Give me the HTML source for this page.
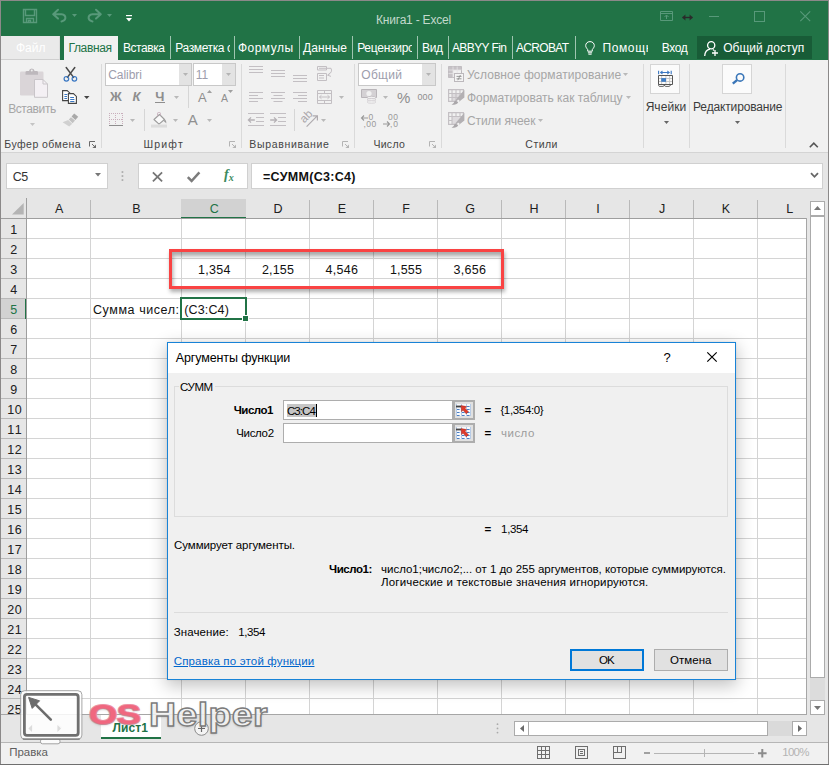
<!DOCTYPE html>
<html lang="ru">
<head>
<meta charset="utf-8">
<title>Книга1 - Excel</title>
<style>
*{box-sizing:border-box;margin:0;padding:0}
html,body{width:829px;height:765px;overflow:hidden;background:#fff}
body{font-family:"Liberation Sans",sans-serif;font-size:12px;color:#262626;position:relative}
.abs{position:absolute}
svg{overflow:visible}
#win{position:absolute;left:0;top:0;width:829px;height:765px;background:#8b8989;overflow:hidden}
.tt{position:absolute;white-space:nowrap}
</style>
</head>
<body>
<div id="win">
<div class="abs" style="left:1px;top:1px;width:827px;height:59px;background:#217346;"></div>
<svg class="abs" style="left:23px;top:9px;" width="14" height="14" viewBox="0 0 14 14"><path d="M0.5 0.5H13.5V13.5H0.5Z M2.5 0.5V6.5H11.5V0.5 M3.5 13.5V9.5H10.5V13.5 M5.5 13.5V11.5H7.5V13.5" fill="none" stroke="#58997a" stroke-width="1.4"/></svg>
<svg class="abs" style="left:52px;top:9px;" width="15" height="13" viewBox="0 0 15 13"><path d="M6 0.8L1.2 5.2L6 9.6M1.5 5.2H9.5Q13.6 5.6 13.4 9.2Q13 12 9.5 12.4" fill="none" stroke="#58997a" stroke-width="2" stroke-linecap="round" stroke-linejoin="round"/></svg>
<svg class="abs" style="left:72px;top:13.7px;" width="5" height="3" viewBox="0 0 5 3"><path d="M0 0H5L2.5 3Z" fill="#58997a"/></svg>
<svg class="abs" style="left:87px;top:9px;" width="15" height="13" viewBox="0 0 15 13"><path d="M9 0.8L13.8 5.2L9 9.6M13.5 5.2H5.5Q1.4 5.6 1.6 9.2Q2 12 5.5 12.4" fill="none" stroke="#58997a" stroke-width="2" stroke-linecap="round" stroke-linejoin="round"/></svg>
<svg class="abs" style="left:107.2px;top:13.7px;" width="5" height="3" viewBox="0 0 5 3"><path d="M0 0H5L2.5 3Z" fill="#58997a"/></svg>
<svg class="abs" style="left:125.5px;top:14.5px;" width="6" height="7" viewBox="0 0 6 7"><path d="M0 0.6H6" stroke="#fff" stroke-width="1.2"/><path d="M0 3H6L3 6.5Z" fill="#fff"/></svg>
<span id="t1" class="tt " style="left:376.06px;top:14.00px;font-size:12px;line-height:12px;color:#c3d9cc;letter-spacing:-0.209px;">Книга1 - Excel</span>
<svg class="abs" style="left:660px;top:11px;" width="13" height="10" viewBox="0 0 13 10"><path d="M0.5 0.5H12.5V9.5H0.5Z M0.5 2.5H12.5 M6.5 8V4.2 M4.5 6L6.5 4L8.5 6" fill="none" stroke="#58997a" stroke-width="1"/></svg>
<svg class="abs" style="left:682px;top:13.5px;" width="11" height="7" viewBox="0 0 11 7"><path d="M0.5 3.5H10.5" stroke="#2a2a2a" stroke-width="1.4"/><path d="M3.4 0.4L0.2 3.5L3.4 6.6Z M7.6 0.4L10.8 3.5L7.6 6.6Z" fill="#2a2a2a"/></svg>
<div class="abs" style="left:708.5px;top:16px;width:10px;height:1px;background:#58997a;"></div>
<div class="abs" style="left:754px;top:11px;width:10.5px;height:10.5px;border:1px solid #58997a;"></div>
<svg class="abs" style="left:800px;top:11px;" width="10.5" height="10.5" viewBox="0 0 10.5 10.5"><path d="M0.3 0.3L10.2 10.2M10.2 0.3L0.3 10.2" stroke="#58997a" stroke-width="1.1"/></svg>
<div class="abs" style="left:1px;top:36px;width:59.4px;height:24px;background:#eaeaea;border-right:1px solid #dcdcdc;border-bottom:1px solid #cfcfcf;"></div>
<span id="t2" class="tt " style="left:15.96px;top:42.00px;font-size:12px;line-height:12px;color:#ffffff;letter-spacing:0.021px;">Файл</span>
<div class="abs" style="left:64px;top:36px;width:54px;height:24px;background:#f1f1f1;"></div>
<span id="t3" class="tt " style="left:68.46px;top:42.00px;font-size:12px;line-height:12px;color:#217346;letter-spacing:-0.351px;">Главная</span>
<span id="t4" class="tt " style="left:122.96px;top:42.00px;font-size:12px;line-height:12px;color:#ffffff;letter-spacing:-0.422px;">Вставка</span>
<div class="abs" style="left:175.36px;top:42.00px;width:54.94px;height:15px;overflow:hidden"><span id="t5" class="tt " style="left:0px;top:0px;font-size:12px;line-height:12px;color:#ffffff;letter-spacing:-0.397px;">Разметка страницы</span></div>
<span id="t6" class="tt " style="left:237.96px;top:42.00px;font-size:12px;line-height:12px;color:#ffffff;letter-spacing:0.477px;">Формулы</span>
<span id="t7" class="tt " style="left:302.96px;top:42.00px;font-size:12px;line-height:12px;color:#ffffff;letter-spacing:0.144px;">Данные</span>
<div class="abs" style="left:357.16px;top:42.00px;width:54.64px;height:15px;overflow:hidden"><span id="t8" class="tt " style="left:0px;top:0px;font-size:12px;line-height:12px;color:#ffffff;letter-spacing:-0.271px;">Рецензирование</span></div>
<span id="t9" class="tt " style="left:421.96px;top:42.00px;font-size:12px;line-height:12px;color:#ffffff;letter-spacing:-0.319px;">Вид</span>
<span id="t10" class="tt " style="left:451.96px;top:42.00px;font-size:12px;line-height:12px;color:#ffffff;letter-spacing:-0.592px;">ABBYY Fin</span>
<span id="t11" class="tt " style="left:515.96px;top:42.00px;font-size:12px;line-height:12px;color:#ffffff;letter-spacing:-0.674px;">ACROBAT</span>
<div class="abs" style="left:602.46px;top:42.00px;width:45.84px;height:15px;overflow:hidden"><span id="t12" class="tt " style="left:0px;top:0px;font-size:12px;line-height:12px;color:#ffffff;letter-spacing:0.618px;">Помощник</span></div>
<span id="t13" class="tt " style="left:661.76px;top:42.00px;font-size:12px;line-height:12px;color:#ffffff;letter-spacing:-0.392px;">Вход</span>
<div class="abs" style="left:170px;top:36px;width:1px;height:23px;background:#9fc5b0;"></div>
<div class="abs" style="left:234px;top:36px;width:1px;height:23px;background:#9fc5b0;"></div>
<div class="abs" style="left:298.5px;top:36px;width:1px;height:23px;background:#9fc5b0;"></div>
<div class="abs" style="left:352px;top:36px;width:1px;height:23px;background:#9fc5b0;"></div>
<div class="abs" style="left:416.5px;top:36px;width:1px;height:23px;background:#9fc5b0;"></div>
<div class="abs" style="left:447.5px;top:36px;width:1px;height:23px;background:#9fc5b0;"></div>
<div class="abs" style="left:511.5px;top:36px;width:1px;height:23px;background:#9fc5b0;"></div>
<div class="abs" style="left:575px;top:36px;width:1px;height:23px;background:#9fc5b0;"></div>
<svg class="abs" style="left:585.4px;top:40.6px;" width="10" height="14" viewBox="0 0 10 14"><path d="M5 0.6C2.2 0.6 0.7 2.6 0.7 4.6C0.7 6.4 1.9 7.4 2.7 8.6V10.2H7.3V8.6C8.1 7.4 9.3 6.4 9.3 4.6C9.3 2.6 7.8 0.6 5 0.6Z M2.9 11.8H7.1 M3.4 13.2H6.6" fill="none" stroke="#fff" stroke-width="1"/></svg>
<div class="abs" style="left:697px;top:36px;width:114.5px;height:23px;background:#185c37;"></div>
<svg class="abs" style="left:704px;top:40.5px;" width="15" height="15.5" viewBox="0 0 15 15.5"><circle cx="7.2" cy="4.2" r="3.6" fill="none" stroke="#fff" stroke-width="1.3"/><path d="M0.7 15C0.9 11 3.4 8.6 6 8.2M9 8.6L10 9.4" fill="none" stroke="#fff" stroke-width="1.3"/><path d="M11 9V15M8 12H14" stroke="#fff" stroke-width="1.3"/></svg>
<span id="t14" class="tt " style="left:723.16px;top:42.00px;font-size:12px;line-height:12px;color:#ffffff;letter-spacing:0.041px;">Общий доступ</span>
<div class="abs" style="left:1px;top:60px;width:827px;height:92px;background:#f1f1f1;"></div>
<div class="abs" style="left:1px;top:152px;width:827px;height:1px;background:#d4d4d4;"></div>
<svg class="abs" style="left:19px;top:68px;" width="30" height="30" viewBox="0 0 30 30"><rect x="1" y="3.5" width="23.5" height="24" rx="1.2" fill="#dad5d8"/><path d="M6.5 6.8V4.2Q6.5 3 8 3H10Q10.3 0.4 12.8 0.4Q15.3 0.4 15.6 3H17.6Q19 3 19 4.2V6.8Z" fill="#bdb8bc"/><circle cx="12.8" cy="2.6" r="1" fill="#eee"/><path d="M15.5 11.5H24L28.5 16V29.3H15.5Z" fill="#f4f0f4" stroke="#c9c5c9" stroke-width="1"/><path d="M24 11.5V16H28.5" fill="none" stroke="#c9c5c9" stroke-width="1"/></svg>
<span id="t15" class="tt " style="left:8.16px;top:103.00px;font-size:12px;line-height:12px;color:#a6a6a6;letter-spacing:-0.399px;">Вставить</span>
<svg class="abs" style="left:30.1px;top:122.9px;" width="5" height="3" viewBox="0 0 5 3"><path d="M0 0H5L2.5 3Z" fill="#c4c4c4"/></svg>
<svg class="abs" style="left:62.5px;top:66.5px;" width="15" height="15" viewBox="0 0 15 15"><path d="M3.2 0.5L10.6 10.4M11.8 0.5L4.4 10.4" stroke="#4a4a4a" stroke-width="1.5" stroke-linecap="round"/><circle cx="3.4" cy="11.8" r="2.3" fill="none" stroke="#3b78c3" stroke-width="1.2"/><circle cx="11.4" cy="11.8" r="2.3" fill="none" stroke="#3b78c3" stroke-width="1.2"/></svg>
<svg class="abs" style="left:62px;top:90px;" width="15" height="14" viewBox="0 0 15 14"><path d="M0.6 0.6H5.2L8 3.2V10.6H0.6Z" fill="#fff" stroke="#444" stroke-width="1.1"/><path d="M2.4 4.5H5.4M2.4 6.5H5M2.4 8.5H5" stroke="#3b78c3" stroke-width="1"/><path d="M6.4 3.6H11.4L14.4 6.4V13.4H6.4Z" fill="#fff" stroke="#444" stroke-width="1.1"/><path d="M8.2 7.5H12M8.2 9.5H12.4M8.2 11.5H12.4" stroke="#3b78c3" stroke-width="1"/></svg>
<svg class="abs" style="left:83.85px;top:96px;" width="5.5" height="3" viewBox="0 0 5.5 3"><path d="M0 0H5.5L2.75 3Z" fill="#444"/></svg>
<svg class="abs" style="left:62px;top:113px;" width="17" height="14" viewBox="0 0 17 14"><path d="M12.2 0.6L16.2 3.8L13.4 7L9.6 3.6Z" fill="#a9a9a9"/><path d="M9 4.2L13 7.6L10.6 10.2L6.8 6.6Z" fill="#c2c2c2"/><path d="M6.2 7L10.2 10.8L7.2 13.6L0.6 9.2Z" fill="#d0d0d0"/></svg>
<span id="t16" class="tt " style="left:4.33px;top:139.00px;font-size:10.5px;line-height:10.5px;color:#444444;letter-spacing:0.453px;">Буфер обмена</span>
<svg class="abs" style="left:89px;top:141px;" width="7" height="7" viewBox="0 0 7 7"><path d="M0.5 5.5V0.5H6" fill="none" stroke="#6a6a6a" stroke-width="1"/><path d="M3 3L5.6 5.6" stroke="#6a6a6a" stroke-width="1"/><path d="M7 3.4V7H3.4Z" fill="#6a6a6a"/></svg>
<div class="abs" style="left:100.5px;top:64px;width:1px;height:84px;background:#dadada;"></div>
<div class="abs" style="left:105px;top:63px;width:87px;height:23px;background:#ffffff;border:1px solid #c8c8c8;"></div>
<div class="abs" style="left:179.4px;top:64px;width:11.6px;height:21px;background:#e3e3e3;"></div>
<svg class="abs" style="left:182.7px;top:73.2px;" width="5" height="3" viewBox="0 0 5 3"><path d="M0 0H5L2.5 3Z" fill="#b4b4b4"/></svg>
<span id="t17" class="tt " style="left:108.26px;top:69.00px;font-size:12px;line-height:12px;color:#9d9dac;letter-spacing:-0.056px;">Calibri</span>
<div class="abs" style="left:193.4px;top:63px;width:42.4px;height:23px;background:#ffffff;border:1px solid #c8c8c8;"></div>
<div class="abs" style="left:222px;top:64px;width:12.8px;height:21px;background:#e3e3e3;"></div>
<svg class="abs" style="left:225.9px;top:73.2px;" width="5" height="3" viewBox="0 0 5 3"><path d="M0 0H5L2.5 3Z" fill="#b4b4b4"/></svg>
<span id="t18" class="tt " style="left:195.66px;top:69.00px;font-size:12px;line-height:12px;color:#9d9dac;">11</span>
<span id="t19" class="tt " style="left:110.02px;top:90.00px;font-size:13px;line-height:13px;color:#8e8e8e;font-weight:700;">Ж</span>
<span id="t20" class="tt " style="left:132.41px;top:90.00px;font-size:13px;line-height:13px;color:#8e8e8e;font-weight:700;font-style:italic;">К</span>
<span id="t21" class="tt " style="left:155.31px;top:90.00px;font-size:13px;line-height:13px;color:#8e8e8e;font-weight:700;">Ч</span>
<div class="abs" style="left:155px;top:102px;width:10px;height:1px;background:#8e8e8e;"></div>
<svg class="abs" style="left:173.9px;top:95.7px;" width="5" height="3" viewBox="0 0 5 3"><path d="M0 0H5L2.5 3Z" fill="#b9b9b9"/></svg>
<div class="abs" style="left:187.5px;top:86px;width:1px;height:22px;background:#d6d6d6;"></div>
<span id="t22" class="tt " style="left:198.01px;top:91.00px;font-size:13px;line-height:13px;color:#8e8e8e;">A</span>
<svg class="abs" style="left:207px;top:90px;" width="5" height="3" viewBox="0 0 5 3"><path d="M0 3H5L2.5 0Z" fill="#a0a0a0"/></svg>
<span id="t23" class="tt " style="left:220.93px;top:93.00px;font-size:10.5px;line-height:10.5px;color:#8e8e8e;">A</span>
<svg class="abs" style="left:228px;top:90px;" width="5" height="3" viewBox="0 0 5 3"><path d="M0 0H5L2.5 3Z" fill="#a0a0a0"/></svg>
<svg class="abs" style="left:109px;top:113px;" width="14" height="13" viewBox="0 0 14 13"><path d="M0.5 0V12M6.5 0V12M13.5 0V12M0 0.5H14M0 6.5H14" fill="none" stroke="#c9afbc" stroke-width="1" stroke-dasharray="1 1" shape-rendering="crispEdges"/><path d="M0 12.5H14" stroke="#8e8e8e" stroke-width="1" shape-rendering="crispEdges"/></svg>
<svg class="abs" style="left:129.9px;top:118.8px;" width="5" height="3" viewBox="0 0 5 3"><path d="M0 0H5L2.5 3Z" fill="#b9b9b9"/></svg>
<div class="abs" style="left:143.6px;top:109px;width:1px;height:22px;background:#d6d6d6;"></div>
<svg class="abs" style="left:151px;top:112px;" width="17" height="16" viewBox="0 0 17 16"><path d="M3 7.5L8.5 2.5L13.5 7.5L8 12.2Z" fill="#fafafa" stroke="#9c9c9c" stroke-width="1.1" stroke-linejoin="round"/><path d="M6.6 4.2V1.2Q6.6 0.5 7.6 0.5H8.4Q9.4 0.5 9.4 1.2V3.4" fill="none" stroke="#c9b3bf" stroke-width="1"/><path d="M13.2 7Q15.8 8.6 15.2 11.4Q14.2 10 13.2 9.8Z" fill="#9c9c9c"/><rect x="0" y="12.6" width="16" height="3" fill="#dcdcdc"/></svg>
<svg class="abs" style="left:173px;top:118.8px;" width="5" height="3" viewBox="0 0 5 3"><path d="M0 0H5L2.5 3Z" fill="#b9b9b9"/></svg>
<span id="t24" class="tt " style="left:187.82px;top:112.00px;font-size:15px;line-height:15px;color:#909090;">A</span>
<svg class="abs" style="left:207px;top:118.8px;" width="5" height="3" viewBox="0 0 5 3"><path d="M0 0H5L2.5 3Z" fill="#b9b9b9"/></svg>
<span id="t25" class="tt " style="left:143.53px;top:139.00px;font-size:10.5px;line-height:10.5px;color:#444444;letter-spacing:1.175px;">Шрифт</span>
<svg class="abs" style="left:229px;top:141px;" width="7" height="7" viewBox="0 0 7 7"><path d="M0.5 5.5V0.5H6" fill="none" stroke="#b4b4b4" stroke-width="1"/><path d="M3 3L5.6 5.6" stroke="#b4b4b4" stroke-width="1"/><path d="M7 3.4V7H3.4Z" fill="#b4b4b4"/></svg>
<div class="abs" style="left:240.6px;top:64px;width:1px;height:84px;background:#dadada;"></div>
<svg class="abs" style="left:0px;top:0px;" width="1" height="1" viewBox="0 0 1 1"><path d="M249 66.5H263M249 69.5H263M249 72.5H263" stroke="#c3bfc3" stroke-width="1"/></svg>
<svg class="abs" style="left:0px;top:0px;" width="1" height="1" viewBox="0 0 1 1"><path d="M271 70.5H285M271 73.5H285M271 76.5H285" stroke="#c3bfc3" stroke-width="1"/></svg>
<svg class="abs" style="left:0px;top:0px;" width="1" height="1" viewBox="0 0 1 1"><path d="M293 75.5H307M293 78.5H307M293 81.5H307" stroke="#c3bfc3" stroke-width="1"/></svg>
<svg class="abs" style="left:0px;top:0px;" width="1" height="1" viewBox="0 0 1 1"><path d="M249 92.5H263M249 95.5H258M249 98.5H263M249 101.5H258" stroke="#c3bfc3" stroke-width="1"/></svg>
<svg class="abs" style="left:0px;top:0px;" width="1" height="1" viewBox="0 0 1 1"><path d="M271 92.5H285M273.5 95.5H282.5M271 98.5H285M273.5 101.5H282.5" stroke="#c3bfc3" stroke-width="1"/></svg>
<svg class="abs" style="left:0px;top:0px;" width="1" height="1" viewBox="0 0 1 1"><path d="M293 92.5H307M298 95.5H307M293 98.5H307M298 101.5H307" stroke="#c3bfc3" stroke-width="1"/></svg>
<svg class="abs" style="left:317px;top:66px;" width="16" height="15" viewBox="0 0 16 15"><path d="M0.5 0.5H9.5V4H0.5Z M0.5 7.5H9.5V14.5H0.5Z" fill="none" stroke="#c3bfc3" stroke-width="1"/><path d="M2 2.3H14 M2 9.5H7 M2 12H7" stroke="#c3bfc3" stroke-width="1"/><path d="M14 2.3Q16 6 11 9M13.4 6.6L10.6 9.2L14 10.4" fill="none" stroke="#c3bfc3" stroke-width="1"/></svg>
<svg class="abs" style="left:317px;top:89.5px;" width="15" height="14" viewBox="0 0 15 14"><path d="M0.5 0.5H14.5V13.5H0.5Z M0.5 3.5H14.5 M0.5 10.5H14.5 M7.5 0.5V3.5 M7.5 10.5V13.5" fill="none" stroke="#c3bfc3" stroke-width="1"/><path d="M2.5 7H12.5 M4.5 5.2L2.5 7L4.5 8.8 M10.5 5.2L12.5 7L10.5 8.8" fill="none" stroke="#c3bfc3" stroke-width="1"/></svg>
<svg class="abs" style="left:338.9px;top:95.9px;" width="5" height="3" viewBox="0 0 5 3"><path d="M0 0H5L2.5 3Z" fill="#b9b9b9"/></svg>
<svg class="abs" style="left:0px;top:0px;" width="1" height="1" viewBox="0 0 1 1"><path d="M248 113.5H264M256 117.5H264M256 121.5H264M248 125.5H264" stroke="#c3bfc3" stroke-width="1"/></svg>
<svg class="abs" style="left:248px;top:116.5px;" width="7" height="6" viewBox="0 0 7 6"><path d="M0.3 3H6.8M3 0.4L0.4 3L3 5.6" fill="none" stroke="#b5b1b5" stroke-width="1.3"/></svg>
<svg class="abs" style="left:0px;top:0px;" width="1" height="1" viewBox="0 0 1 1"><path d="M270 113.5H286M278 117.5H286M278 121.5H286M270 125.5H286" stroke="#c3bfc3" stroke-width="1"/></svg>
<svg class="abs" style="left:270px;top:116.5px;" width="7" height="6" viewBox="0 0 7 6"><path d="M0.2 3H6.7M4 0.4L6.6 3L4 5.6" fill="none" stroke="#b5b1b5" stroke-width="1.3"/></svg>
<div class="abs" style="left:293.6px;top:109px;width:1px;height:22px;background:#d6d6d6;"></div>
<span id="t26" class="tt " style="left:-0.52px;top:-9.00px;font-size:11.5px;line-height:11.5px;color:#a9a5a9;left:300px;top:110.5px;transform:rotate(-45deg);transform-origin:50% 50%;">ab</span>
<svg class="abs" style="left:304px;top:113px;" width="14" height="14" viewBox="0 0 14 14"><path d="M2.6 13.6L13 3.2M8.6 2.8H13.4V7.6" fill="none" stroke="#aeaaae" stroke-width="1.2"/></svg>
<svg class="abs" style="left:321.1px;top:118.7px;" width="5" height="3" viewBox="0 0 5 3"><path d="M0 0H5L2.5 3Z" fill="#b9b9b9"/></svg>
<span id="t27" class="tt " style="left:249.33px;top:139.00px;font-size:10.5px;line-height:10.5px;color:#444444;letter-spacing:0.660px;">Выравнивание</span>
<svg class="abs" style="left:342px;top:141px;" width="7" height="7" viewBox="0 0 7 7"><path d="M0.5 5.5V0.5H6" fill="none" stroke="#b4b4b4" stroke-width="1"/><path d="M3 3L5.6 5.6" stroke="#b4b4b4" stroke-width="1"/><path d="M7 3.4V7H3.4Z" fill="#b4b4b4"/></svg>
<div class="abs" style="left:353.6px;top:64px;width:1px;height:84px;background:#dadada;"></div>
<div class="abs" style="left:358.3px;top:63px;width:77.4px;height:23px;background:#ffffff;border:1px solid #c8c8c8;"></div>
<div class="abs" style="left:422px;top:64px;width:12.7px;height:21px;background:#e3e3e3;"></div>
<svg class="abs" style="left:425.85px;top:73.2px;" width="5" height="3" viewBox="0 0 5 3"><path d="M0 0H5L2.5 3Z" fill="#b4b4b4"/></svg>
<span id="t28" class="tt " style="left:361.36px;top:69.00px;font-size:12px;line-height:12px;color:#9d9dac;letter-spacing:0.270px;">Общий</span>
<svg class="abs" style="left:361px;top:89px;" width="16" height="15" viewBox="0 0 16 15"><path d="M0.5 0.5H15.5V8.5H0.5Z" fill="#d4d1d4" stroke="#b9b5b9" stroke-width="1"/><circle cx="8" cy="4.5" r="2.6" fill="#f1f1f1"/><ellipse cx="10.5" cy="8.6" rx="4.4" ry="1.3" fill="#f1f1f1" stroke="#c4c0c4" stroke-width="0.9"/><ellipse cx="10.5" cy="10.8" rx="4.4" ry="1.3" fill="#f1f1f1" stroke="#cfcbcf" stroke-width="0.9"/><ellipse cx="10.5" cy="13" rx="4.4" ry="1.3" fill="#f1f1f1" stroke="#d6d3d6" stroke-width="0.9"/></svg>
<svg class="abs" style="left:383px;top:95.9px;" width="5" height="3" viewBox="0 0 5 3"><path d="M0 0H5L2.5 3Z" fill="#b9b9b9"/></svg>
<span id="t29" class="tt " style="left:396.93px;top:90.00px;font-size:15px;line-height:15px;color:#8e8e8e;">%</span>
<span id="t30" class="tt " style="left:417.40px;top:93.00px;font-size:9px;line-height:9px;color:#8e8e8e;letter-spacing:0.139px;">000</span>
<span id="t31" class="tt " style="left:368.62px;top:113.00px;font-size:8.5px;line-height:8.5px;color:#999;">0</span>
<span id="t32" class="tt " style="left:363.62px;top:120.00px;font-size:8.5px;line-height:8.5px;color:#999;letter-spacing:0.368px;">,00</span>
<svg class="abs" style="left:361.3px;top:114.5px;" width="8" height="6" viewBox="0 0 8 6"><path d="M0.4 3H7M3 0.5L0.5 3L3 5.5" fill="none" stroke="#999" stroke-width="1.1"/></svg>
<span id="t33" class="tt " style="left:388.12px;top:113.00px;font-size:8.5px;line-height:8.5px;color:#999;letter-spacing:0.296px;">00</span>
<span id="t34" class="tt " style="left:390.12px;top:120.00px;font-size:8.5px;line-height:8.5px;color:#999;letter-spacing:0.671px;">,0</span>
<svg class="abs" style="left:383px;top:121px;" width="8" height="6" viewBox="0 0 8 6"><path d="M0 3H6.6M4 0.5L6.5 3L4 5.5" fill="none" stroke="#999" stroke-width="1.1"/></svg>
<span id="t35" class="tt " style="left:373.43px;top:139.00px;font-size:10.5px;line-height:10.5px;color:#444444;letter-spacing:0.285px;">Число</span>
<svg class="abs" style="left:429px;top:141px;" width="7" height="7" viewBox="0 0 7 7"><path d="M0.5 5.5V0.5H6" fill="none" stroke="#b4b4b4" stroke-width="1"/><path d="M3 3L5.6 5.6" stroke="#b4b4b4" stroke-width="1"/><path d="M7 3.4V7H3.4Z" fill="#b4b4b4"/></svg>
<div class="abs" style="left:440.5px;top:64px;width:1px;height:84px;background:#dadada;"></div>
<svg class="abs" style="left:448px;top:66px;" width="16" height="16" viewBox="0 0 16 16"><path d="M0.5 0.5H13.5V11.5H0.5Z" fill="none" stroke="#bcb8bc" stroke-width="1"/><path d="M0.5 0.5H5V11.5H0.5Z M0.5 0.5H13.5V4H0.5Z" fill="#c6c2c6"/><path d="M5 0.5V11.5M9.2 0.5V11.5M0.5 4H13.5M0.5 7.6H13.5" stroke="#e6e3e6" stroke-width="0.8"/><rect x="6.5" y="7.5" width="9" height="8" fill="#f4f4f4" stroke="#bcb8bc" stroke-width="1"/><path d="M8.5 10.4H13.5M8.5 12.8H13.5M12.4 9L9.8 14.2" stroke="#8e8e8e" stroke-width="0.9"/></svg>
<svg class="abs" style="left:448px;top:89px;" width="16" height="16" viewBox="0 0 16 16"><rect x="4" y="4.5" width="8" height="8" fill="#dedbde"/><path d="M4 0.5V12.5M8 0.5V12.5M12 0.5V12.5M0.5 4.5H15.5M0.5 8.5H15.5" fill="none" stroke="#c4c0c4" stroke-width="1.1"/><path d="M0.6 0.6H15.4V12.4H0.6Z" fill="none" stroke="#c4c0c4" stroke-width="1.2"/><path d="M16.8 7.6V14H9.4Z" fill="#f1f1f1"/><path d="M16.4 0.8V8.4L10.6 13L7.4 11.2Z" fill="#b3b0b3"/><path d="M7 11.4L10.2 13.2Q9 15.8 3.6 15.8Q6.2 14 7 11.4Z" fill="#aaa7aa"/><circle cx="10.3" cy="12" r="1.15" fill="#f1f1f1"/></svg>
<svg class="abs" style="left:448px;top:112px;" width="16" height="16" viewBox="0 0 16 16"><rect x="4" y="4.5" width="11.5" height="8" fill="#dedbde"/><path d="M4 0.5V12.5M8 0.5V4.5M12 0.5V4.5M0.5 4.5H15.5M0.5 8.5H4" fill="none" stroke="#c4c0c4" stroke-width="1.1"/><path d="M0.6 0.6H15.4V12.4H0.6Z" fill="none" stroke="#c4c0c4" stroke-width="1.2"/><path d="M16.8 7.6V14H9.4Z" fill="#f1f1f1"/><path d="M16.4 0.8V8.4L10.6 13L7.4 11.2Z" fill="#b3b0b3"/><path d="M7 11.4L10.2 13.2Q9 15.8 3.6 15.8Q6.2 14 7 11.4Z" fill="#aaa7aa"/><circle cx="10.3" cy="12" r="1.15" fill="#f1f1f1"/></svg>
<span id="t36" class="tt " style="left:466.96px;top:69.00px;font-size:12px;line-height:12px;color:#a6a6a6;letter-spacing:0.073px;">Условное форматирование</span>
<svg class="abs" style="left:622.8px;top:73.1px;" width="5" height="3" viewBox="0 0 5 3"><path d="M0 0H5L2.5 3Z" fill="#b9b9b9"/></svg>
<span id="t37" class="tt " style="left:466.96px;top:92.00px;font-size:12px;line-height:12px;color:#a6a6a6;letter-spacing:-0.023px;">Форматировать как таблицу</span>
<svg class="abs" style="left:625.8px;top:95.9px;" width="5" height="3" viewBox="0 0 5 3"><path d="M0 0H5L2.5 3Z" fill="#b9b9b9"/></svg>
<span id="t38" class="tt " style="left:466.96px;top:115.00px;font-size:12px;line-height:12px;color:#a6a6a6;letter-spacing:-0.079px;">Стили ячеек</span>
<svg class="abs" style="left:537.9px;top:118.7px;" width="5" height="3" viewBox="0 0 5 3"><path d="M0 0H5L2.5 3Z" fill="#b9b9b9"/></svg>
<span id="t39" class="tt " style="left:525.33px;top:139.00px;font-size:10.5px;line-height:10.5px;color:#444444;letter-spacing:0.474px;">Стили</span>
<div class="abs" style="left:642.7px;top:64px;width:1px;height:84px;background:#dadada;"></div>
<div class="abs" style="left:650.3px;top:64px;width:29.7px;height:29.7px;background:#fbfbfb;border:1px solid #d5d5d5;"></div>
<svg class="abs" style="left:658px;top:70px;" width="15" height="17" viewBox="0 0 15 17"><path d="M2.6 2.5H11.2M0.6 0.8V4.2M13.2 0.8V4.2" fill="none" stroke="#3b78c3" stroke-width="1.1"/><path d="M4.2 0.9L2.2 2.5L4.2 4.1ZM9.6 0.9L11.6 2.5L9.6 4.1Z" fill="#3b78c3" stroke="#3b78c3" stroke-width="0.6"/><path d="M3.6 5.5V14.5M7.9 5.5V14.5M11.6 5.5V14.5M0.5 8.5H14.5M0.5 11.5H14.5" fill="none" stroke="#c2c2c2" stroke-width="0.9"/><path d="M0.5 5.5H14.5V14.5H0.5Z" fill="none" stroke="#555" stroke-width="1"/><rect x="3.2" y="8.1" width="4.8" height="3.7" fill="#3f7dc4"/><path d="M0.6 14.6V15.6Q0.8 16.4 1.8 16.4H5Q6 16.4 6.2 15.2M6.4 14.8Q6.6 16.4 7.6 16.4H11Q12 16.4 12.6 14.8" fill="none" stroke="#555" stroke-width="0.9"/></svg>
<span id="t40" class="tt " style="left:645.66px;top:101.00px;font-size:12px;line-height:12px;color:#3c3c3c;letter-spacing:0.046px;">Ячейки</span>
<svg class="abs" style="left:663.9px;top:120.7px;" width="5" height="3" viewBox="0 0 5 3"><path d="M0 0H5L2.5 3Z" fill="#666"/></svg>
<div class="abs" style="left:689px;top:64px;width:1px;height:84px;background:#dadada;"></div>
<div class="abs" style="left:722px;top:64px;width:29.7px;height:29.7px;background:#fbfbfb;border:1px solid #d5d5d5;"></div>
<svg class="abs" style="left:730.5px;top:73px;" width="14" height="12" viewBox="0 0 14 12"><circle cx="9.1" cy="4.4" r="3.7" fill="none" stroke="#3a76b8" stroke-width="1.6"/><path d="M6 7.1L1.8 10.6" stroke="#3a76b8" stroke-width="2.5" stroke-linecap="butt"/></svg>
<span id="t41" class="tt " style="left:693.06px;top:101.00px;font-size:12px;line-height:12px;color:#3c3c3c;letter-spacing:-0.149px;">Редактирование</span>
<svg class="abs" style="left:734.9px;top:120.7px;" width="5" height="3" viewBox="0 0 5 3"><path d="M0 0H5L2.5 3Z" fill="#666"/></svg>
<div class="abs" style="left:785.2px;top:64px;width:1px;height:84px;background:#dadada;"></div>
<svg class="abs" style="left:808.5px;top:141.5px;" width="10" height="6" viewBox="0 0 10 6"><path d="M0.8 5.2L4.8 1.2L8.8 5.2" fill="none" stroke="#555" stroke-width="1.6"/></svg>
<div class="abs" style="left:1px;top:153px;width:827px;height:45px;background:#e6e6e6;"></div>
<div class="abs" style="left:6px;top:163px;width:102px;height:26px;background:#ffffff;border:1px solid #d0d0d0;"></div>
<span id="t42" class="tt " style="left:12.74px;top:171.00px;font-size:12.5px;line-height:12.5px;color:#333;letter-spacing:-0.459px;">C5</span>
<svg class="abs" style="left:94.5px;top:173.3px;" width="6" height="3.4" viewBox="0 0 6 3.4"><path d="M0 0H6L3 3.4Z" fill="#777"/></svg>
<svg class="abs" style="left:121.3px;top:171px;" width="3" height="10" viewBox="0 0 3 10"><rect x="0.6" y="0.2" width="1.7" height="1.7" fill="#a9a9a9"/><rect x="0.6" y="4.2" width="1.7" height="1.7" fill="#a9a9a9"/><rect x="0.6" y="8.2" width="1.7" height="1.7" fill="#a9a9a9"/></svg>
<div class="abs" style="left:138px;top:163px;width:110px;height:26px;background:#ffffff;border:1px solid #d0d0d0;"></div>
<svg class="abs" style="left:151.5px;top:170.5px;" width="11" height="11" viewBox="0 0 11 11"><path d="M0.9 1.4L10.1 10.4M10.1 1.4L0.9 10.4" stroke="#767676" stroke-width="1.8"/></svg>
<svg class="abs" style="left:187px;top:170.5px;" width="13" height="11" viewBox="0 0 13 11"><path d="M0.8 6.2L4.6 10L12.4 1.4" fill="none" stroke="#7c7c7c" stroke-width="2.5"/></svg>
<span id="t43" class="tt " style="left:-0.63px;top:-12.00px;font-size:14px;line-height:14px;color:#3b8a5e;left:224px;top:167.5px;font-family:'Liberation Serif',serif;font-style:italic;font-weight:700;">f</span>
<span id="t44" class="tt " style="left:-0.45px;top:-8.00px;font-size:10px;line-height:10px;color:#3b8a5e;left:228.8px;top:173px;font-family:'Liberation Serif',serif;font-style:italic;font-weight:700;">x</span>
<div class="abs" style="left:251px;top:163px;width:572px;height:26px;background:#ffffff;border:1px solid #d0d0d0;"></div>
<span id="t45" class="tt " style="left:263.04px;top:171.00px;font-size:12.5px;line-height:12.5px;color:#111;font-weight:700;letter-spacing:0.282px;">=СУММ(C3:C4)</span>
<svg class="abs" style="left:809.5px;top:171.5px;" width="9" height="7" viewBox="0 0 9 7"><path d="M1 1.2L4.5 4.8L8 1.2" fill="none" stroke="#666" stroke-width="1.8"/></svg>
<div class="abs" style="left:1px;top:198px;width:827px;height:517px;background:#e6e6e6;"></div>
<div class="abs" style="left:27px;top:219px;width:780px;height:496px;background:#ffffff;"></div>
<svg class="abs" style="left:0px;top:0px;" width="1" height="1" viewBox="0 0 1 1"><path d="M90.5 219V715M181.5 219V715M245.5 219V715M309.5 219V715M373.5 219V715M437.5 219V715M501.5 219V715M565.5 219V715M629.5 219V715M693.5 219V715M757.5 219V715M27 238.5H806M27 258.5H806M27 278.5H806M27 298.5H806M27 318.5H806M27 338.5H806M27 358.5H806M27 378.5H806M27 398.5H806M27 418.5H806M27 438.5H806M27 458.5H806M27 478.5H806M27 498.5H806M27 518.5H806M27 538.5H806M27 558.5H806M27 578.5H806M27 598.5H806M27 618.5H806M27 638.5H806M27 658.5H806M27 678.5H806M27 698.5H806" stroke="#d4d4d4" stroke-width="1" shape-rendering="crispEdges"/></svg>
<svg class="abs" style="left:0px;top:0px;" width="1" height="1" viewBox="0 0 1 1"><path d="M90.5 200V218M181.5 200V218M245.5 200V218M309.5 200V218M373.5 200V218M437.5 200V218M501.5 200V218M565.5 200V218M629.5 200V218M693.5 200V218M757.5 200V218M1 238.5H26M1 258.5H26M1 278.5H26M1 298.5H26M1 318.5H26M1 338.5H26M1 358.5H26M1 378.5H26M1 398.5H26M1 418.5H26M1 438.5H26M1 458.5H26M1 478.5H26M1 498.5H26M1 518.5H26M1 538.5H26M1 558.5H26M1 578.5H26M1 598.5H26M1 618.5H26M1 638.5H26M1 658.5H26M1 678.5H26M1 698.5H26" stroke="#b9b9b9" stroke-width="1" shape-rendering="crispEdges"/></svg>
<div class="abs" style="left:181px;top:199px;width:65px;height:18px;background:#d2d2d2;"></div>
<div class="abs" style="left:181px;top:217px;width:65px;height:2px;background:#217346;"></div>
<div class="abs" style="left:1px;top:299px;width:25px;height:19px;background:#d2d2d2;"></div>
<div class="abs" style="left:25px;top:299px;width:2px;height:20px;background:#217346;"></div>
<div class="abs" style="left:1px;top:218px;width:806px;height:1px;background:#9e9e9e;"></div>
<div class="abs" style="left:26px;top:198px;width:1px;height:517px;background:#9e9e9e;"></div>
<div class="abs" style="left:806px;top:218px;width:1px;height:497px;background:#a6a6a6;"></div>
<div class="abs" style="left:1px;top:714px;width:806px;height:1px;background:#a6a6a6;"></div>
<svg class="abs" style="left:11.5px;top:203.3px;" width="11.7" height="11.5" viewBox="0 0 11.7 11.5"><path d="M11.7 0V11.5H0Z" fill="#b4b4b4"/></svg>
<span id="t46" class="tt " style="left:59.14px;top:203.00px;font-size:12.5px;line-height:12.5px;color:#202020;transform:translateX(-50%);">A</span>
<span id="t47" class="tt " style="left:136.44px;top:203.00px;font-size:12.5px;line-height:12.5px;color:#202020;transform:translateX(-50%);">B</span>
<span id="t48" class="tt " style="left:214.24px;top:203.00px;font-size:12.5px;line-height:12.5px;color:#217346;transform:translateX(-50%);">C</span>
<span id="t49" class="tt " style="left:278.04px;top:203.00px;font-size:12.5px;line-height:12.5px;color:#202020;transform:translateX(-50%);">D</span>
<span id="t50" class="tt " style="left:342.04px;top:203.00px;font-size:12.5px;line-height:12.5px;color:#202020;transform:translateX(-50%);">E</span>
<span id="t51" class="tt " style="left:406.04px;top:203.00px;font-size:12.5px;line-height:12.5px;color:#202020;transform:translateX(-50%);">F</span>
<span id="t52" class="tt " style="left:470.04px;top:203.00px;font-size:12.5px;line-height:12.5px;color:#202020;transform:translateX(-50%);">G</span>
<span id="t53" class="tt " style="left:534.04px;top:203.00px;font-size:12.5px;line-height:12.5px;color:#202020;transform:translateX(-50%);">H</span>
<span id="t54" class="tt " style="left:598.04px;top:203.00px;font-size:12.5px;line-height:12.5px;color:#202020;transform:translateX(-50%);">I</span>
<span id="t55" class="tt " style="left:662.04px;top:203.00px;font-size:12.5px;line-height:12.5px;color:#202020;transform:translateX(-50%);">J</span>
<span id="t56" class="tt " style="left:726.04px;top:203.00px;font-size:12.5px;line-height:12.5px;color:#202020;transform:translateX(-50%);">K</span>
<span id="t57" class="tt " style="left:789.84px;top:203.00px;font-size:12.5px;line-height:12.5px;color:#202020;transform:translateX(-50%);">L</span>
<span id="t58" class="tt " style="left:13.64px;top:224.00px;font-size:12.5px;line-height:12.5px;color:#202020;transform:translateX(-50%);">1</span>
<span id="t59" class="tt " style="left:13.64px;top:244.00px;font-size:12.5px;line-height:12.5px;color:#202020;transform:translateX(-50%);">2</span>
<span id="t60" class="tt " style="left:13.64px;top:264.00px;font-size:12.5px;line-height:12.5px;color:#202020;transform:translateX(-50%);">3</span>
<span id="t61" class="tt " style="left:13.64px;top:284.00px;font-size:12.5px;line-height:12.5px;color:#202020;transform:translateX(-50%);">4</span>
<span id="t62" class="tt " style="left:13.64px;top:304.00px;font-size:12.5px;line-height:12.5px;color:#217346;transform:translateX(-50%);">5</span>
<span id="t63" class="tt " style="left:13.64px;top:324.00px;font-size:12.5px;line-height:12.5px;color:#202020;transform:translateX(-50%);">6</span>
<span id="t64" class="tt " style="left:13.64px;top:344.00px;font-size:12.5px;line-height:12.5px;color:#202020;transform:translateX(-50%);">7</span>
<span id="t65" class="tt " style="left:13.64px;top:364.00px;font-size:12.5px;line-height:12.5px;color:#202020;transform:translateX(-50%);">8</span>
<span id="t66" class="tt " style="left:13.64px;top:384.00px;font-size:12.5px;line-height:12.5px;color:#202020;transform:translateX(-50%);">9</span>
<span id="t67" class="tt " style="left:7.14px;top:404.00px;font-size:12.5px;line-height:12.5px;color:#202020;letter-spacing:0.619px;">10</span>
<span id="t68" class="tt " style="left:7.14px;top:424.00px;font-size:12.5px;line-height:12.5px;color:#202020;letter-spacing:1.541px;">11</span>
<span id="t69" class="tt " style="left:7.14px;top:444.00px;font-size:12.5px;line-height:12.5px;color:#202020;letter-spacing:0.619px;">12</span>
<span id="t70" class="tt " style="left:7.14px;top:464.00px;font-size:12.5px;line-height:12.5px;color:#202020;letter-spacing:0.619px;">13</span>
<span id="t71" class="tt " style="left:7.14px;top:484.00px;font-size:12.5px;line-height:12.5px;color:#202020;letter-spacing:0.619px;">14</span>
<span id="t72" class="tt " style="left:7.14px;top:504.00px;font-size:12.5px;line-height:12.5px;color:#202020;letter-spacing:0.619px;">15</span>
<span id="t73" class="tt " style="left:7.14px;top:524.00px;font-size:12.5px;line-height:12.5px;color:#202020;letter-spacing:0.619px;">16</span>
<span id="t74" class="tt " style="left:7.14px;top:544.00px;font-size:12.5px;line-height:12.5px;color:#202020;letter-spacing:0.619px;">17</span>
<span id="t75" class="tt " style="left:7.14px;top:564.00px;font-size:12.5px;line-height:12.5px;color:#202020;letter-spacing:0.619px;">18</span>
<span id="t76" class="tt " style="left:7.14px;top:584.00px;font-size:12.5px;line-height:12.5px;color:#202020;letter-spacing:0.619px;">19</span>
<span id="t77" class="tt " style="left:7.14px;top:604.00px;font-size:12.5px;line-height:12.5px;color:#202020;letter-spacing:0.619px;">20</span>
<span id="t78" class="tt " style="left:7.14px;top:624.00px;font-size:12.5px;line-height:12.5px;color:#202020;letter-spacing:0.619px;">21</span>
<span id="t79" class="tt " style="left:7.14px;top:644.00px;font-size:12.5px;line-height:12.5px;color:#202020;letter-spacing:0.619px;">22</span>
<span id="t80" class="tt " style="left:7.14px;top:664.00px;font-size:12.5px;line-height:12.5px;color:#202020;letter-spacing:0.619px;">23</span>
<span id="t81" class="tt " style="left:7.14px;top:684.00px;font-size:12.5px;line-height:12.5px;color:#202020;letter-spacing:0.619px;">24</span>
<span id="t82" class="tt " style="left:7.14px;top:704.00px;font-size:12.5px;line-height:12.5px;color:#202020;letter-spacing:0.619px;">25</span>
<span id="t83" class="tt " style="left:198.04px;top:264.00px;font-size:12.5px;line-height:12.5px;color:#111111;letter-spacing:0.311px;">1,354</span>
<span id="t84" class="tt " style="left:261.94px;top:264.00px;font-size:12.5px;line-height:12.5px;color:#111111;letter-spacing:0.186px;">2,155</span>
<span id="t85" class="tt " style="left:325.44px;top:264.00px;font-size:12.5px;line-height:12.5px;color:#111111;letter-spacing:0.311px;">4,546</span>
<span id="t86" class="tt " style="left:389.94px;top:264.00px;font-size:12.5px;line-height:12.5px;color:#111111;letter-spacing:0.186px;">1,555</span>
<span id="t87" class="tt " style="left:453.44px;top:264.00px;font-size:12.5px;line-height:12.5px;color:#111111;letter-spacing:0.311px;">3,656</span>
<span id="t88" class="tt " style="left:93.04px;top:304.00px;font-size:12.5px;line-height:12.5px;color:#111111;letter-spacing:0.565px;">Сумма чисел:</span>
<div class="abs" style="left:180px;top:297px;width:67px;height:23px;background:#ffffff;border:2px solid #217346;"></div>
<div class="abs" style="left:242px;top:315px;width:7px;height:7px;background:#ffffff;"></div>
<div class="abs" style="left:243px;top:316px;width:5px;height:5px;background:#217346;"></div>
<span id="t89" class="tt " style="left:184.24px;top:304.00px;font-size:12.5px;line-height:12.5px;color:#111111;letter-spacing:0.143px;">(C3:C4)</span>
<div class="abs" style="left:169px;top:249px;width:335px;height:40px;border:3px solid #f94343;box-shadow:1px 3px 4px rgba(0,0,0,.32), inset 1px 4px 4px rgba(0,0,0,.34);"></div>
<div class="abs" style="left:810px;top:201px;width:15px;height:15px;background:#ffffff;border:1px solid #ababab;"></div>
<svg class="abs" style="left:814px;top:206px;" width="7" height="4" viewBox="0 0 7 4"><path d="M0 4H7L3.5 0Z" fill="#777"/></svg>
<div class="abs" style="left:810px;top:216px;width:15px;height:462px;background:#ffffff;border:1px solid #ababab;"></div>
<div class="abs" style="left:810px;top:678px;width:15px;height:22px;background:#dcdcdc;"></div>
<div class="abs" style="left:810px;top:700px;width:15px;height:15px;background:#ffffff;border:1px solid #ababab;"></div>
<svg class="abs" style="left:814px;top:706px;" width="7" height="4" viewBox="0 0 7 4"><path d="M0 0H7L3.5 4Z" fill="#777"/></svg>
<div class="abs" style="left:1px;top:715px;width:827px;height:27px;background:#e6e6e6;"></div>
<div class="abs" style="left:1px;top:742px;width:827px;height:1px;background:#b6b6b6;"></div>
<div class="abs" style="left:1px;top:743px;width:827px;height:21px;background:#f1f1f1;"></div>
<div class="abs" style="left:0px;top:764px;width:829px;height:1px;background:#6f6f6f;"></div>
<svg class="abs" style="left:29px;top:724px;" width="4" height="7" viewBox="0 0 4 7"><path d="M4 0V7L0 3.5Z" fill="#cfcfcf"/></svg>
<svg class="abs" style="left:58px;top:724px;" width="4" height="7" viewBox="0 0 4 7"><path d="M0 0V7L4 3.5Z" fill="#cfcfcf"/></svg>
<div class="abs" style="left:101px;top:715px;width:60px;height:22px;background:#ffffff;"></div>
<div class="abs" style="left:101px;top:737px;width:60px;height:2px;background:#217346;"></div>
<span id="t90" class="tt " style="left:112.56px;top:722.00px;font-size:12px;line-height:12px;color:#217346;font-weight:700;letter-spacing:0.087px;">Лист1</span>
<svg class="abs" style="left:194.2px;top:721px;" width="15" height="15" viewBox="0 0 15 15"><circle cx="7.5" cy="7.5" r="6.8" fill="#f4f4f4" stroke="#8a8a8a" stroke-width="1"/><path d="M7.5 4V11M4 7.5H11" stroke="#6a6a6a" stroke-width="1.2"/></svg>
<svg class="abs" style="left:496.3px;top:722.5px;" width="3" height="11" viewBox="0 0 3 11"><circle cx="1.5" cy="1.2" r="0.9" fill="#aaa"/><circle cx="1.5" cy="5.4" r="0.9" fill="#aaa"/><circle cx="1.5" cy="9.6" r="0.9" fill="#aaa"/></svg>
<div class="abs" style="left:514px;top:721px;width:15px;height:15px;background:#ffffff;border:1px solid #ababab;"></div>
<svg class="abs" style="left:519.5px;top:725px;" width="4" height="7" viewBox="0 0 4 7"><path d="M4 0V7L0 3.5Z" fill="#6a6a6a"/></svg>
<div class="abs" style="left:528px;top:721px;width:240px;height:15px;background:#ffffff;border:1px solid #ababab;"></div>
<div class="abs" style="left:768px;top:721px;width:24px;height:15px;background:#dadada;"></div>
<div class="abs" style="left:792px;top:721px;width:15px;height:15px;background:#ffffff;border:1px solid #ababab;"></div>
<svg class="abs" style="left:797.5px;top:725px;" width="4" height="7" viewBox="0 0 4 7"><path d="M0 0V7L4 3.5Z" fill="#6a6a6a"/></svg>
<span id="t91" class="tt " style="left:9.18px;top:747.00px;font-size:11.5px;line-height:11.5px;color:#5e5e5e;">Правка</span>
<svg class="abs" style="left:537px;top:746px;" width="13" height="13" viewBox="0 0 13 13"><path d="M0.5 0.5H12.5V12.5H0.5Z M0.5 4.5H12.5 M0.5 8.5H12.5 M4.5 0.5V12.5 M8.5 0.5V12.5" fill="none" stroke="#6e6e6e" stroke-width="1" shape-rendering="crispEdges"/></svg>
<svg class="abs" style="left:575px;top:746px;" width="13" height="13" viewBox="0 0 13 13"><path d="M0.5 0.5H12.5V12.5H0.5Z M3.5 3.5H9.5V9.5H3.5Z" fill="none" stroke="#6e6e6e" stroke-width="1" shape-rendering="crispEdges"/><path d="M5 5.5H8M5 7.5H8" stroke="#6e6e6e" stroke-width="1" shape-rendering="crispEdges"/></svg>
<svg class="abs" style="left:613px;top:746px;" width="13" height="13" viewBox="0 0 13 13"><path d="M0.5 0.5H12.5V12.5H0.5Z M0.5 6.5H8.5V0.5 M4.5 0.5V6.5" fill="none" stroke="#6e6e6e" stroke-width="1" shape-rendering="crispEdges"/></svg>
<div class="abs" style="left:643.5px;top:752px;width:6.5px;height:1.6px;background:#a0a0a0;"></div>
<div class="abs" style="left:654px;top:752.5px;width:100px;height:1px;background:#b5b5b5;"></div>
<div class="abs" style="left:704px;top:749px;width:1px;height:8px;background:#b5b5b5;"></div>
<svg class="abs" style="left:758px;top:748.5px;" width="8.6" height="8.6" viewBox="0 0 8.6 8.6"><path d="M0 4.3H8.6M4.3 0V8.6" stroke="#8c8c8c" stroke-width="2"/></svg>
<span id="t92" class="tt " style="left:782.28px;top:747.00px;font-size:11.5px;line-height:11.5px;color:#b4b4b4;letter-spacing:-0.762px;">100%</span>
<div class="abs" style="left:167px;top:342px;width:569px;height:338px;background:#f0f0f0;border:1px solid #1883d7;box-shadow:0 5px 16px 1px rgba(0,0,0,.24),0 0 2px rgba(0,0,0,.10);"></div>
<div class="abs" style="left:168px;top:343px;width:567px;height:30px;background:#ffffff;"></div>
<span id="t93" class="tt " style="left:175.84px;top:352.00px;font-size:12.5px;line-height:12.5px;color:#000;letter-spacing:-0.129px;">Аргументы функции</span>
<span id="t94" class="tt " style="left:663.41px;top:351.00px;font-size:13px;line-height:13px;color:#000;">?</span>
<svg class="abs" style="left:707px;top:352px;" width="10" height="10" viewBox="0 0 10 10"><path d="M0.3 0.3L9.7 9.7M9.7 0.3L0.3 9.7" stroke="#000" stroke-width="1.2"/></svg>
<div class="abs" style="left:174px;top:386px;width:554px;height:131px;border:1px solid #dcdcdc;"></div>
<div class="abs" style="left:178.5px;top:384px;width:36.5px;height:6px;background:#f0f0f0;"></div>
<span id="t95" class="tt " style="left:180.08px;top:382.00px;font-size:11.5px;line-height:11.5px;color:#000;letter-spacing:-0.452px;">СУММ</span>
<div class="abs" style="left:283px;top:400px;width:170px;height:20px;background:#ffffff;border:1px solid #adadad;"></div>
<div class="abs" style="left:453px;top:400px;width:22px;height:20px;background:#e1e1e1;border:2px solid #adadad;"></div>
<svg class="abs" style="left:456px;top:404px;" width="15" height="12" viewBox="0 0 15 12"><rect x="0" y="0" width="15" height="12" fill="#f7f9fc"/><path d="M0 2.5H15M0 5.5H15M0 8.5H15M0 11.5H15" stroke="#4a7fc4" stroke-width="1" stroke-dasharray="3.6 1.4"/><path d="M0.5 0V12M5.5 0V12M10.5 0V12M14.5 0V12" stroke="#b7cbe6" stroke-width="1"/><rect x="0" y="1.6" width="5" height="1.8" fill="#444"/><path d="M5 1.6L10.6 2.6L9 4.2L12.4 7.8L10.2 9.8L7 6L5.6 7.6Z" fill="#e03a2a" stroke="#a3241a" stroke-width="0.5"/></svg>
<div class="abs" style="left:283px;top:423px;width:170px;height:20px;background:#ffffff;border:1px solid #adadad;"></div>
<div class="abs" style="left:453px;top:423px;width:22px;height:20px;background:#e1e1e1;border:2px solid #adadad;"></div>
<svg class="abs" style="left:456px;top:427px;" width="15" height="12" viewBox="0 0 15 12"><rect x="0" y="0" width="15" height="12" fill="#f7f9fc"/><path d="M0 2.5H15M0 5.5H15M0 8.5H15M0 11.5H15" stroke="#4a7fc4" stroke-width="1" stroke-dasharray="3.6 1.4"/><path d="M0.5 0V12M5.5 0V12M10.5 0V12M14.5 0V12" stroke="#b7cbe6" stroke-width="1"/><rect x="0" y="1.6" width="5" height="1.8" fill="#444"/><path d="M5 1.6L10.6 2.6L9 4.2L12.4 7.8L10.2 9.8L7 6L5.6 7.6Z" fill="#e03a2a" stroke="#a3241a" stroke-width="0.5"/></svg>
<div class="abs" style="left:287px;top:404px;width:28.5px;height:13px;background:#c6c6c6;"></div>
<span id="t96" class="tt " style="left:286.98px;top:406.00px;font-size:11.5px;line-height:11.5px;color:#000;letter-spacing:-0.919px;">C3:C4</span>
<div class="abs" style="left:316px;top:404px;width:1px;height:13px;background:#000;"></div>
<span id="t97" class="tt " style="left:233.78px;top:405.00px;font-size:11.5px;line-height:11.5px;color:#000;font-weight:700;letter-spacing:-0.498px;">Число1</span>
<span id="t98" class="tt " style="left:236.18px;top:428.00px;font-size:11.5px;line-height:11.5px;color:#000;letter-spacing:-0.310px;">Число2</span>
<span id="t99" class="tt " style="left:484.38px;top:405.00px;font-size:11.5px;line-height:11.5px;color:#000;font-weight:700;">=</span>
<span id="t100" class="tt " style="left:500.38px;top:405.00px;font-size:11.5px;line-height:11.5px;color:#000;letter-spacing:-0.341px;">{1,354:0}</span>
<span id="t101" class="tt " style="left:484.38px;top:428.00px;font-size:11.5px;line-height:11.5px;color:#000;font-weight:700;">=</span>
<span id="t102" class="tt " style="left:501.08px;top:428.00px;font-size:11.5px;line-height:11.5px;color:#9c9c9c;letter-spacing:0.457px;">число</span>
<span id="t103" class="tt " style="left:484.38px;top:524.00px;font-size:11.5px;line-height:11.5px;color:#000;font-weight:700;">=</span>
<span id="t104" class="tt " style="left:501.08px;top:524.00px;font-size:11.5px;line-height:11.5px;color:#000;letter-spacing:-0.337px;">1,354</span>
<span id="t105" class="tt " style="left:174.08px;top:540.00px;font-size:11.5px;line-height:11.5px;color:#000;letter-spacing:-0.083px;">Суммирует аргументы.</span>
<span id="t106" class="tt " style="left:329.08px;top:564.00px;font-size:11.5px;line-height:11.5px;color:#000;font-weight:700;letter-spacing:-0.436px;">Число1:</span>
<span id="t107" class="tt " style="left:381.08px;top:564.00px;font-size:11.5px;line-height:11.5px;color:#000;letter-spacing:-0.026px;">число1;число2;... от 1 до 255 аргументов, которые суммируются.</span>
<span id="t108" class="tt " style="left:381.08px;top:577.00px;font-size:11.5px;line-height:11.5px;color:#000;letter-spacing:0.152px;">Логические и текстовые значения игнорируются.</span>
<div class="abs" style="left:174px;top:612px;width:554px;height:1px;background:#dcdcdc;"></div>
<span id="t109" class="tt " style="left:173.78px;top:627.00px;font-size:11.5px;line-height:11.5px;color:#000;letter-spacing:0.104px;">Значение:</span>
<span id="t110" class="tt " style="left:238.28px;top:627.00px;font-size:11.5px;line-height:11.5px;color:#000;letter-spacing:-0.387px;">1,354</span>
<span id="t111" class="tt " style="left:173.68px;top:656.00px;font-size:11.5px;line-height:11.5px;color:#0066cc;letter-spacing:0.174px;text-decoration:underline;">Справка по этой функции</span>
<div class="abs" style="left:570px;top:649px;width:74px;height:22px;background:#e1e1e1;border:2px solid #0078d7;"></div>
<span id="t112" class="tt " style="left:598.98px;top:655.00px;font-size:11.5px;line-height:11.5px;color:#000;letter-spacing:-0.890px;">OK</span>
<div class="abs" style="left:654px;top:649px;width:74px;height:22px;background:#e1e1e1;border:1px solid #adadad;"></div>
<span id="t113" class="tt " style="left:670.08px;top:655.00px;font-size:11.5px;line-height:11.5px;color:#000;letter-spacing:0.034px;">Отмена</span>
<svg class="abs" style="left:20px;top:689.5px;" width="63" height="55" viewBox="0 0 63 55"><rect x="20.5" y="49" width="19.5" height="4.8" rx="2" fill="#fbfbfb" stroke="#9a9a9a" stroke-width="0.9"/><rect x="0.7" y="0.7" width="61.2" height="48.4" rx="4" fill="rgba(255,255,255,0.86)" stroke="#9c9c9c" stroke-width="0.9"/><rect x="4.4" y="4.4" width="53.8" height="41" rx="2.6" fill="none" stroke="#707070" stroke-width="2.8"/><path d="M3.4 49.2H59.2" stroke="#777" stroke-width="1.3" stroke-linecap="round"/><path d="M30.8 29.6L14 12.8" stroke="#6c6c6c" stroke-width="2.6" stroke-linecap="round"/><path d="M8.6 7.4L19.6 10.8L12.2 18.4Z" fill="#6c6c6c" stroke="#6c6c6c" stroke-width="1" stroke-linejoin="round"/><path d="M12 35V42L8.4 38.5Z M37.4 35V42L41 38.5Z" fill="#dcdcdc"/></svg>
<span class="tt" style="left:88.6px;top:695.6px;font-size:28.5px;line-height:36px;font-weight:700;color:#f0677f;-webkit-text-stroke:1.8px #f493a6;paint-order:stroke fill;transform-origin:0 0;transform:scaleX(1.27);letter-spacing:-0.3px;text-shadow:0 1px 2px rgba(120,120,120,.5);">OS</span>
<span class="tt" style="left:149.4px;top:696.5px;font-size:32.5px;line-height:36px;font-weight:700;color:rgba(255,255,255,.82);-webkit-text-stroke:1.3px #7c7c7c;transform-origin:0 0;transform:scaleX(1.15);letter-spacing:0.4px;text-shadow:0 1px 2px rgba(90,90,90,.45);">Helper</span>
</div>
</body>
</html>
